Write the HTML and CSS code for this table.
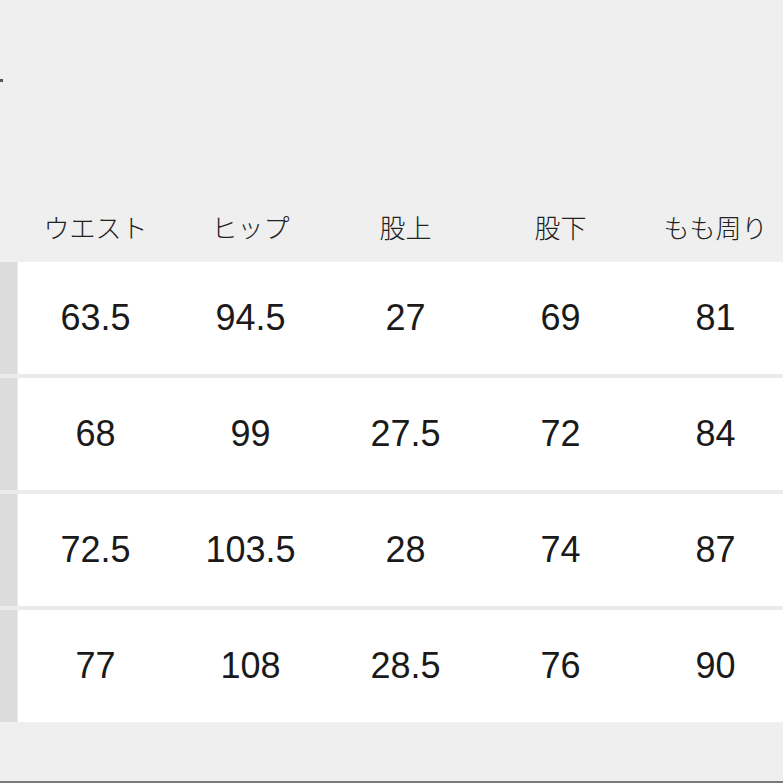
FILE: index.html
```html
<!DOCTYPE html>
<html lang="ja">
<head>
<meta charset="utf-8">
<link rel="stylesheet" href="styles.css">
</head>
<body>
<div class="page">
  <div class="top"><span class="mark"></span></div>
  <div class="head">
    <div class="hc">ウエスト</div>
    <div class="hc">ヒップ</div>
    <div class="hc">股上</div>
    <div class="hc">股下</div>
    <div class="hc">もも周り</div>
  </div>
  <div class="rows">
    <div class="row"><div class="strip"></div><div class="cells"><div class="c">63.5</div><div class="c">94.5</div><div class="c">27</div><div class="c">69</div><div class="c">81</div></div></div>
    <div class="row"><div class="strip"></div><div class="cells"><div class="c">68</div><div class="c">99</div><div class="c">27.5</div><div class="c">72</div><div class="c">84</div></div></div>
    <div class="row"><div class="strip"></div><div class="cells"><div class="c">72.5</div><div class="c">103.5</div><div class="c">28</div><div class="c">74</div><div class="c">87</div></div></div>
    <div class="row"><div class="strip"></div><div class="cells"><div class="c">77</div><div class="c">108</div><div class="c">28.5</div><div class="c">76</div><div class="c">90</div></div></div>
  </div>
  <div class="bottom"></div>
</div>
</body>
</html>
```
FILE: styles.css
```css
html, body {
  margin: 0;
  padding: 0;
  background: #efefef;
  overflow: hidden;
}
.page {
  width: 783px;
  height: 783px;
  display: flex;
  flex-direction: column;
  overflow: hidden;
  font-family: "Liberation Sans", "Noto Sans CJK JP", sans-serif;
}
.top {
  height: 201px;
  position: relative;
}
.mark {
  position: absolute;
  left: 0;
  top: 79px;
  width: 3px;
  height: 3px;
  background: #555;
}
.head {
  height: 50px;
  margin-left: 18px;
  display: grid;
  grid-template-columns: repeat(5, 155px);
  align-items: center;
  margin-bottom: 11px;
}
.hc {
  text-align: center;
  font-family: "Noto Sans CJK JP", sans-serif;
  font-size: 26px;
  font-weight: 300;
  color: #222;
  white-space: nowrap;
}
.rows {
  display: flex;
  flex-direction: column;
  gap: 4px;
  background: #ebebeb;
}
.row {
  display: flex;
  height: 112px;
}
.strip {
  width: 17px;
  flex: none;
  background: #dcdcdc;
  margin-right: 1px;
}
.cells {
  flex: 1;
  background: #fff;
  display: grid;
  grid-template-columns: repeat(5, 155px);
  align-items: center;
}
.c {
  text-align: center;
  font-size: 36px;
  color: #1a1a1a;
  white-space: nowrap;
}
.bottom {
  flex: 1;
  border-bottom: 2px solid #7a7a7a;
}
```
